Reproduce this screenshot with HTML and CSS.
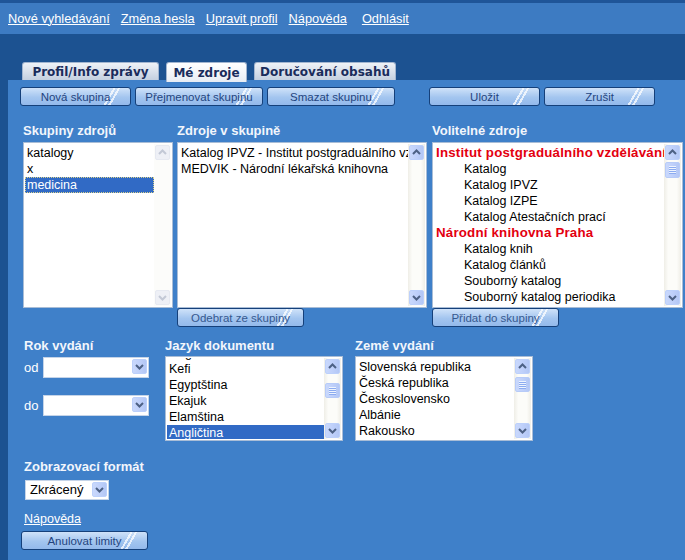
FILE: index.html
```html
<!DOCTYPE html>
<html lang="cs">
<head>
    <meta charset="UTF-8">
    <title>Mé zdroje</title>
    <link rel="stylesheet" href="styles.css">
</head>
<body>
    <div class="top-line"></div>
    <div class="nav">
        <a href="javascript:;">Nové vyhledávání</a>
        <a href="javascript:;">Změna hesla</a>
        <a href="javascript:;">Upravit profil</a>
        <a href="javascript:;">Nápověda</a>
        <a href="javascript:;" class="logout">Odhlásit</a>
    </div>

    <!-- záložky -->
    <div class="tabs">
        <a href="javascript:;" class="tab tab-profile">Profil/Info zprávy</a>
        <a href="javascript:;" class="tab tab-sources">Mé zdroje</a>
        <a href="javascript:;" class="tab tab-delivery">Doručování obsahů</a>
    </div>

    <div class="panel">
        <div class="toolbar">
            <a href="javascript:;" class="btn w111">Nová skupina</a>
            <a href="javascript:;" class="btn w128">Přejmenovat skupinu</a>
            <a href="javascript:;" class="btn w128">Smazat skupinu</a>
            <a href="javascript:;" class="btn w111 btn-save">Uložit</a>
            <a href="javascript:;" class="btn w111">Zrušit</a>
        </div>

        <div class="sources">
            <div class="col col-groups">
                <div class="label">Skupiny zdrojů</div>
                <div class="listbox big">
                    <div class="items">
                        <div class="item">katalogy</div>
                        <div class="item">x</div>
                        <div class="item selected focus">medicina</div>
                    </div>
                    <div class="sb disabled">
                        <div class="sb-arrow"><svg width="15" height="15" viewBox="0 0 15 15"><path d="M4 9 L7.5 5.5 L11 9" fill="none" stroke="#c3c9d6" stroke-width="2"/></svg></div>
                        <div class="sb-track"></div>
                        <div class="sb-arrow"><svg width="15" height="15" viewBox="0 0 15 15"><path d="M4 6 L7.5 9.5 L11 6" fill="none" stroke="#c3c9d6" stroke-width="2"/></svg></div>
                    </div>
                </div>
            </div>

            <div class="col col-in">
                <div class="label">Zdroje v skupině</div>
                <div class="listbox big">
                    <div class="items">
                        <div class="item">Katalog IPVZ - Institut postgraduálního vzdělávání</div>
                        <div class="item">MEDVIK - Národní lékařská knihovna</div>
                    </div>
                    <div class="sb">
                        <div class="sb-arrow"><svg width="15" height="15" viewBox="0 0 15 15"><path d="M4 9 L7.5 5.5 L11 9" fill="none" stroke="#4d6185" stroke-width="2"/></svg></div>
                        <div class="sb-track"></div>
                        <div class="sb-arrow"><svg width="15" height="15" viewBox="0 0 15 15"><path d="M4 6 L7.5 9.5 L11 6" fill="none" stroke="#4d6185" stroke-width="2"/></svg></div>
                    </div>
                </div>
                <a href="javascript:;" class="btn w127 btn-dim">Odebrat ze skupiny</a>
            </div>

            <div class="col col-opt">
                <div class="label">Volitelné zdroje</div>
                <div class="listbox big">
                    <div class="items">
                        <div class="item group">Institut postgraduálního vzdělávání ve zdravotnictví</div>
                        <div class="item child">Katalog</div>
                        <div class="item child">Katalog IPVZ</div>
                        <div class="item child">Katalog IZPE</div>
                        <div class="item child">Katalog Atestačních prací</div>
                        <div class="item group">Národní knihovna Praha</div>
                        <div class="item child">Katalog knih</div>
                        <div class="item child">Katalog článků</div>
                        <div class="item child">Souborný katalog</div>
                        <div class="item child">Souborný katalog periodika</div>
                        <div class="item child">Katalog norem</div>
                    </div>
                    <div class="sb">
                        <div class="sb-arrow"><svg width="15" height="15" viewBox="0 0 15 15"><path d="M4 9 L7.5 5.5 L11 9" fill="none" stroke="#4d6185" stroke-width="2"/></svg></div>
                        <div class="sb-track"><div class="sb-thumb thumb-top"></div></div>
                        <div class="sb-arrow"><svg width="15" height="15" viewBox="0 0 15 15"><path d="M4 6 L7.5 9.5 L11 6" fill="none" stroke="#4d6185" stroke-width="2"/></svg></div>
                    </div>
                </div>
                <a href="javascript:;" class="btn w127 btn-dim">Přidat do skupiny</a>
            </div>
        </div>

        <!-- limity -->
        <div class="limits">
            <div class="col col-year">
                <div class="label">Rok vydání</div>
                <div class="year-row">
                    <span class="year-label">od</span>
                    <div class="select w106">
                        <span class="select-text"></span>
                        <span class="dd"><svg width="15" height="15" viewBox="0 0 15 15"><path d="M4 6 L7.5 9.5 L11 6" fill="none" stroke="#4d6185" stroke-width="2"/></svg></span>
                    </div>
                </div>
                <div class="year-row year-to">
                    <span class="year-label">do</span>
                    <div class="select w106">
                        <span class="select-text"></span>
                        <span class="dd"><svg width="15" height="15" viewBox="0 0 15 15"><path d="M4 6 L7.5 9.5 L11 6" fill="none" stroke="#4d6185" stroke-width="2"/></svg></span>
                    </div>
                </div>
            </div>

            <div class="col col-lang">
                <div class="label">Jazyk dokumentu</div>
                <div class="listbox small">
                    <div class="items scrolled">
                        <div class="item">Dogri</div>
                        <div class="item">Kefi</div>
                        <div class="item">Egyptština</div>
                        <div class="item">Ekajuk</div>
                        <div class="item">Elamština</div>
                        <div class="item selected">Angličtina</div>
                    </div>
                    <div class="sb">
                        <div class="sb-arrow"><svg width="15" height="15" viewBox="0 0 15 15"><path d="M4 9 L7.5 5.5 L11 9" fill="none" stroke="#4d6185" stroke-width="2"/></svg></div>
                        <div class="sb-track"><div class="sb-thumb thumb-mid"></div></div>
                        <div class="sb-arrow"><svg width="15" height="15" viewBox="0 0 15 15"><path d="M4 6 L7.5 9.5 L11 6" fill="none" stroke="#4d6185" stroke-width="2"/></svg></div>
                    </div>
                </div>
            </div>

            <div class="col col-country">
                <div class="label">Země vydání</div>
                <div class="listbox small">
                    <div class="items">
                        <div class="item">Slovenská republika</div>
                        <div class="item">Česká republika</div>
                        <div class="item">Československo</div>
                        <div class="item">Albánie</div>
                        <div class="item">Rakousko</div>
                    </div>
                    <div class="sb">
                        <div class="sb-arrow"><svg width="15" height="15" viewBox="0 0 15 15"><path d="M4 9 L7.5 5.5 L11 9" fill="none" stroke="#4d6185" stroke-width="2"/></svg></div>
                        <div class="sb-track"><div class="sb-thumb thumb-near"></div></div>
                        <div class="sb-arrow"><svg width="15" height="15" viewBox="0 0 15 15"><path d="M4 6 L7.5 9.5 L11 6" fill="none" stroke="#4d6185" stroke-width="2"/></svg></div>
                    </div>
                </div>
            </div>
        </div>

        <div class="format">
            <div class="label">Zobrazovací formát</div>
            <div class="select w84">
                <span class="select-text">Zkrácený</span>
                <span class="dd"><svg width="15" height="15" viewBox="0 0 15 15"><path d="M4 6 L7.5 9.5 L11 6" fill="none" stroke="#4d6185" stroke-width="2"/></svg></span>
            </div>
        </div>

        <a href="javascript:;" class="help">Nápověda</a>
        <a href="javascript:;" class="btn w127 btn-reset">Anulovat limity</a>
    </div>
</body>
</html>
```

FILE: styles.css
```css
* {
    margin: 0;
    padding: 0;
    box-sizing: border-box;
}

body {
    width: 685px;
    height: 560px;
    overflow: hidden;
    background-color: #1c5291;
    font-family: "Liberation Sans", Arial, sans-serif;
    font-size: 12.5px;
    color: #000;
}

a {
    color: #fff;
}

.top-line {
    height: 3px;
    background-color: #1f5598;
}

.nav {
    height: 31px;
    display: flex;
    align-items: center;
    gap: 11px;
    padding-left: 8px;
    background-color: #3d7bc2;
    font-size: 12.8px;
}

.nav a {
    line-height: 16px;
}

.nav .logout {
    margin-left: 4px;
}

/* záložky */
.tabs {
    height: 46px;
    display: flex;
    align-items: flex-end;
    gap: 7px;
    padding-left: 22px;
}

.tab {
    height: 18px;
    display: flex;
    align-items: center;
    justify-content: center;
    font-family: "DejaVu Sans", Verdana, sans-serif;
    font-weight: bold;
    font-size: 12px;
    color: #1a2c5b;
    text-decoration: none;
    background: linear-gradient(#eef2f7, #c4d0e0);
    border: 1px solid #a3b6d0;
    border-bottom: 0;
    border-radius: 3px 3px 0 0;
}

.tab-profile {
    width: 137px;
}

.tab-sources {
    width: 81px;
    height: 20px;
    margin-bottom: -2px;
    position: relative;
    z-index: 1;
    background: linear-gradient(#ffffff, #e8edf4);
}

.tab-delivery {
    width: 142px;
}

.panel {
    margin-left: 8px;
    height: 480px;
    padding: 7px 0 0 12px;
    background-color: #3f80c9;
}

/* tlačítka */
.toolbar {
    display: flex;
    gap: 4px;
}

.btn {
    height: 19px;
    display: flex;
    align-items: center;
    justify-content: center;
    position: relative;
    z-index: 0;
    overflow: hidden;
    border: 1px solid #15407a;
    border-radius: 3px;
    background: linear-gradient(#cfe2f9, #a3c5ef 55%, #93b9eb);
    color: #24447e;
    font-size: 11.5px;
    font-weight: normal;
    text-decoration: none;
    white-space: nowrap;
}

.btn::after {
    content: "";
    position: absolute;
    z-index: -1;
    top: 0;
    bottom: 0;
    right: 3px;
    width: 24px;
    background: linear-gradient(120deg, transparent 9px, rgba(255, 255, 255, .75) 9px 11px, transparent 11px 13px, rgba(255, 255, 255, .75) 13px 15px, transparent 15px);
}

.w111 {
    width: 111px;
}

.w128 {
    width: 128px;
}

.w127 {
    width: 127px;
}

.btn-save {
    margin-left: 30px;
}

.btn-dim {
    color: #36598f;
}

.label {
    font-weight: bold;
    font-size: 13px;
    line-height: 16px;
    color: #f2f6fc;
    white-space: nowrap;
    margin-bottom: 3px;
}

/* seznamy */
.sources {
    display: flex;
    margin-top: 17px;
}

.col-groups {
    width: 150px;
    margin-left: 3px;
}

.col-in {
    width: 250px;
    margin-left: 4px;
}

.col-opt {
    width: 251px;
    margin-left: 5px;
}

.listbox {
    display: flex;
    padding: 1px;
    border: 1px solid #a9bdd6;
    background-color: #fff;
}

.listbox.big {
    height: 166px;
}

.listbox.small {
    height: 85px;
}

.items {
    flex: 1;
    min-width: 0;
    overflow: hidden;
    padding-top: 1px;
}

.item {
    height: 16px;
    line-height: 16px;
    padding-left: 2px;
    white-space: nowrap;
    overflow: hidden;
}

.item.selected {
    background-color: #316ac5;
    color: #fff;
}

.item.focus {
    outline: 1px dotted #d9d18c;
    outline-offset: -1px;
}

.item.group {
    color: #e3000f;
    font-weight: bold;
    font-size: 13.3px;
    letter-spacing: .2px;
}

.item.child {
    padding-left: 30px;
}

.items.scrolled .item:first-child {
    margin-top: -14px;
}

/* posuvník */
.sb {
    width: 17px;
    flex-shrink: 0;
    display: flex;
    flex-direction: column;
    padding: 1px;
    background: linear-gradient(90deg, #efeee7, #fcfcf9 25%, #fcfcf9 75%, #efeee7);
}

.sb-arrow {
    height: 15px;
    flex-shrink: 0;
    border: 1px solid #bcd0fb;
    border-radius: 2px;
    background: linear-gradient(90deg, #c9d8fc, #bfd0fa 50%, #b3c7f5);
}

.sb-arrow svg {
    display: block;
    margin: -1px;
}

.sb.disabled .sb-arrow {
    border-color: #e6e9f1;
    background: #eef0f6;
}

.sb.disabled {
    background: #fcfcfa;
}

.sb-track {
    flex: 1;
}

.sb-thumb {
    height: 16px;
    border: 1px solid #b7cbf8;
    border-radius: 2px;
    background: linear-gradient(90deg, #c9d8fc, #bfd0fa 50%, #b3c7f5);
    display: flex;
    align-items: center;
    justify-content: center;
}

.sb-thumb::before {
    content: "";
    width: 7px;
    height: 8px;
    background: repeating-linear-gradient(#eef4fe 0 1px, #8cabf0 1px 2px);
}

.thumb-top {
    margin-top: 2px;
}

.thumb-mid {
    margin-top: 9px;
    height: 15px;
}

.thumb-near {
    margin-top: 3px;
    height: 15px;
}

/* limity */
.limits {
    display: flex;
    margin-top: 11px;
}

.col-year {
    width: 141px;
    margin-left: 4px;
}

.col-lang {
    width: 178px;
}

.col-country {
    width: 178px;
    margin-left: 12px;
}

.col-year .label,
.col-lang .label,
.col-country .label {
    margin-bottom: 2px;
}

.year-row {
    display: flex;
    align-items: center;
    margin-top: 3px;
}

.year-to {
    margin-top: 17px;
}

.year-label {
    width: 19px;
    color: #fff;
    font-size: 13px;
}

.select {
    height: 21px;
    display: flex;
    align-items: flex-start;
    padding: 1px;
    border: 1px solid #c5d4e8;
    background-color: #fff;
}

.w106 {
    width: 106px;
}

.w84 {
    width: 84px;
    height: 20px;
}

.select-text {
    flex: 1;
    padding-left: 3px;
    line-height: 16px;
    font-size: 13px;
}

.dd {
    width: 15px;
    height: 15px;
    border: 1px solid #bcd0fb;
    border-radius: 2px;
    background: linear-gradient(90deg, #c9d8fc, #bfd0fa 50%, #b3c7f5);
}

.dd svg {
    display: block;
    margin: -1px;
}

.format {
    margin-top: 18px;
    margin-left: 4px;
}

.format .label {
    margin-bottom: 5px;
}

.format .select {
    margin-left: 1px;
}

.help {
    display: inline-block;
    margin: 11px 0 0 4px;
    line-height: 16px;
}

.btn-reset {
    margin: 4px 0 0 1px;
}
```
